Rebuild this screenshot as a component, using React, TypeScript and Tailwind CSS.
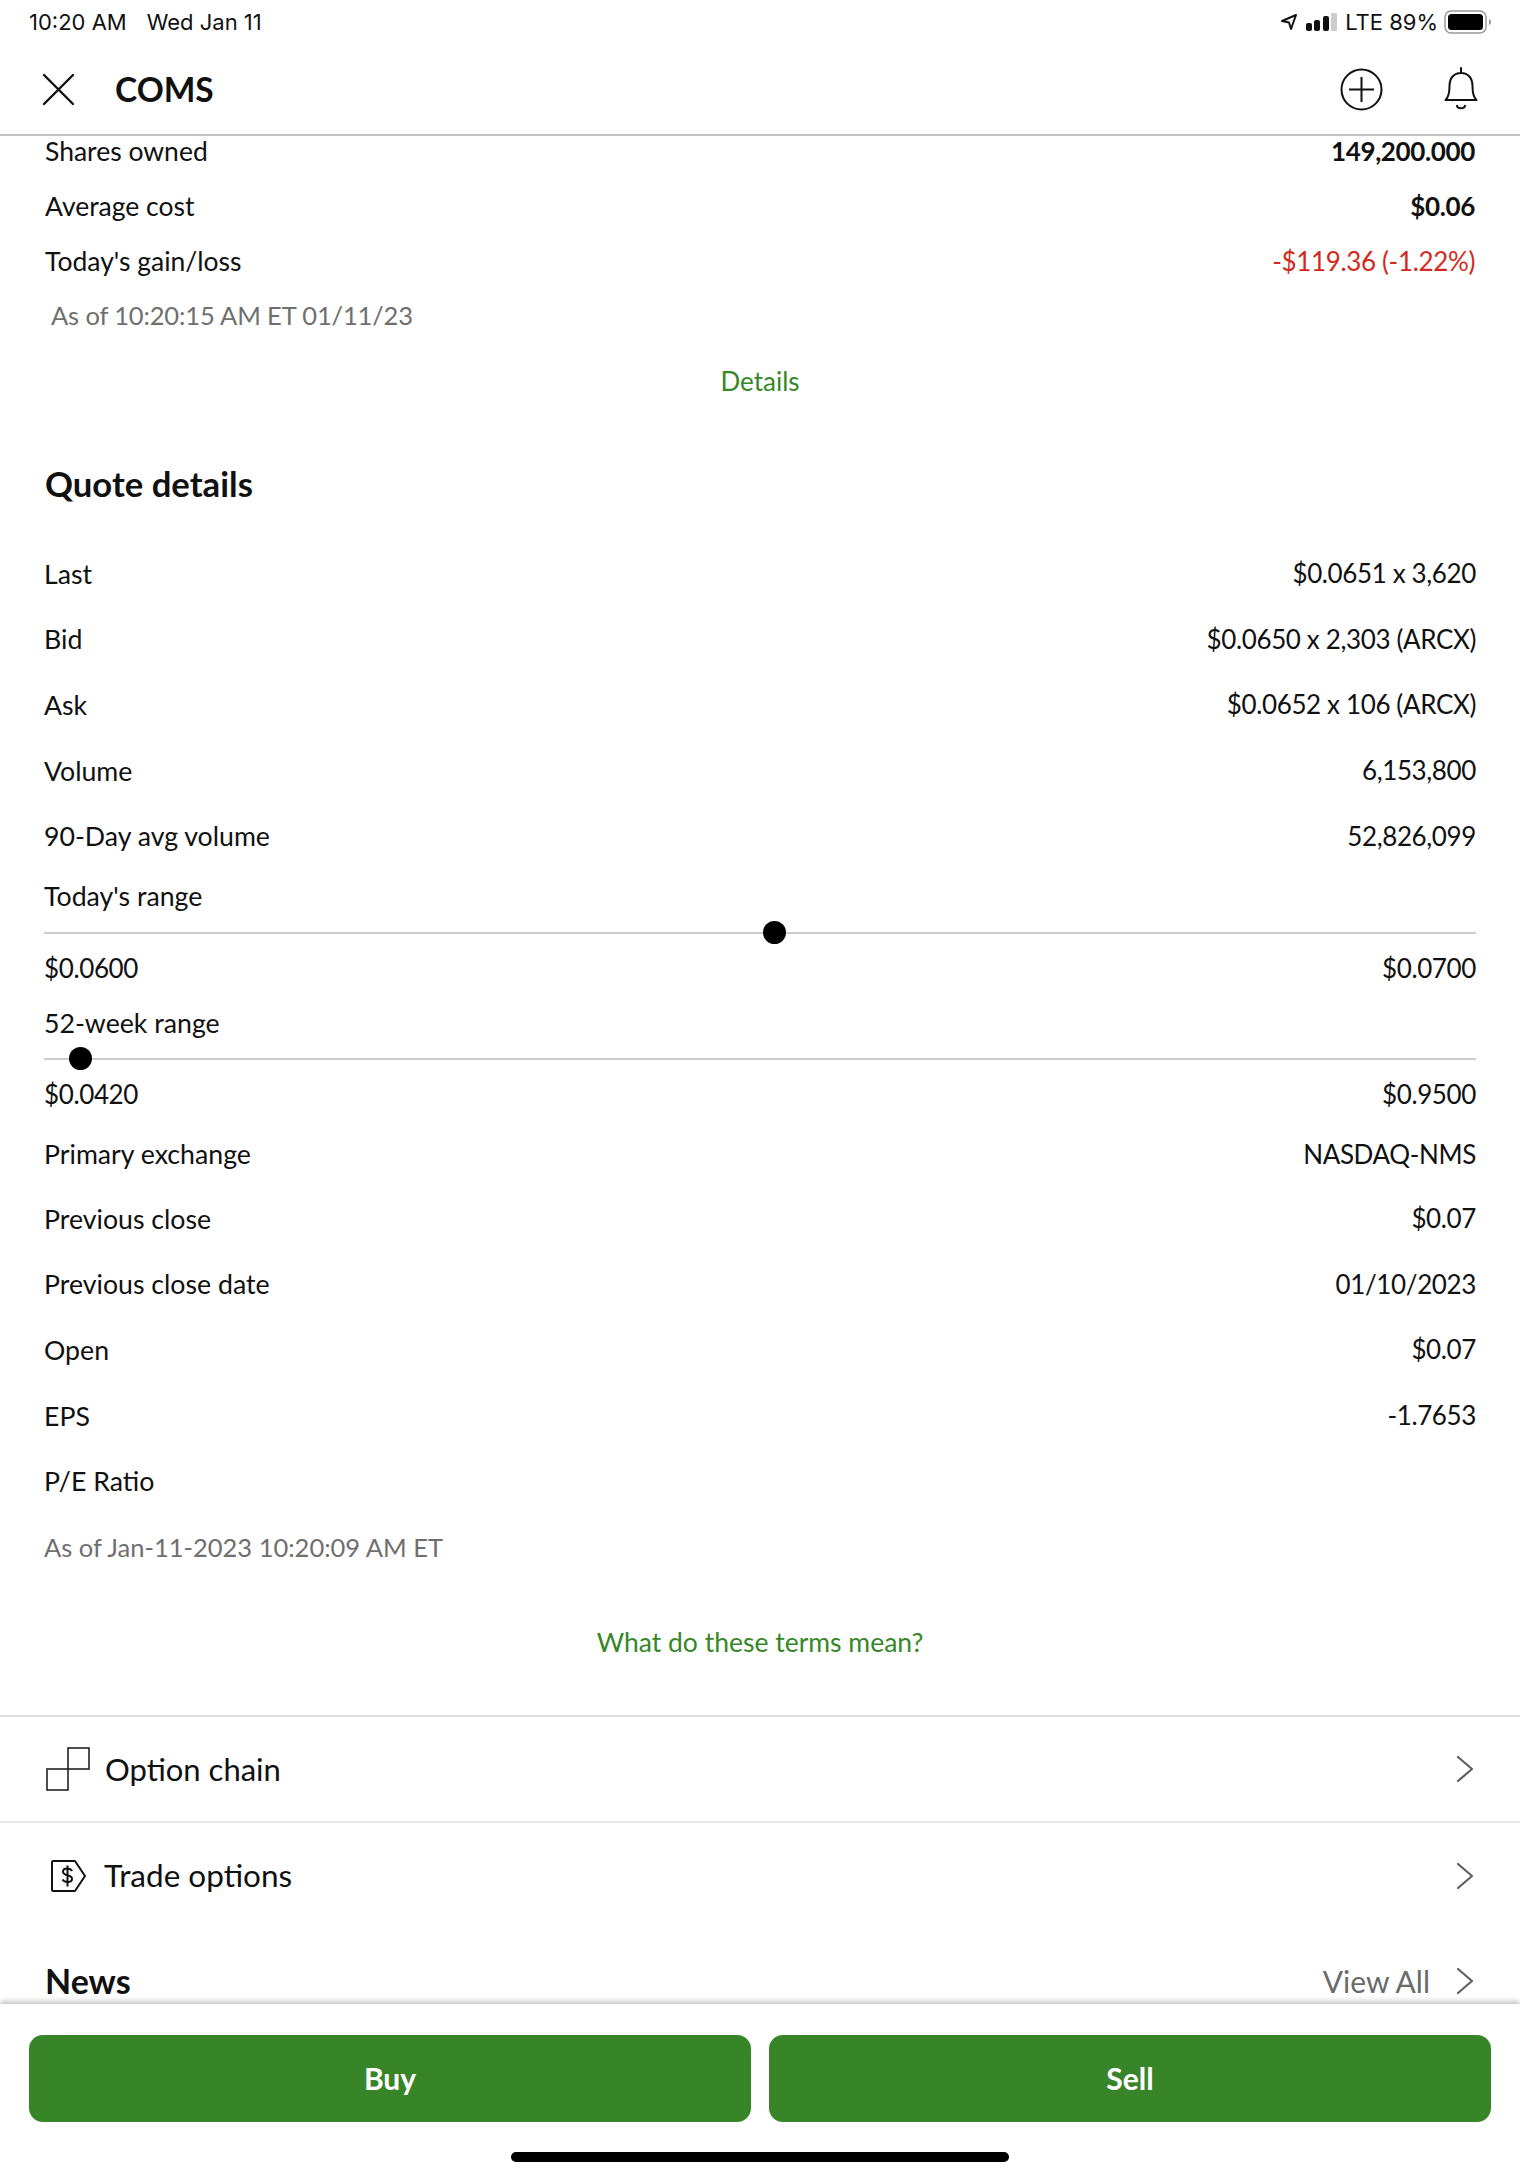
import React from 'react';

const font = "font-['Lato','Open_Sans',sans-serif]";

const Chevron = () => (
  <svg width="18" height="28" viewBox="0 0 18 28" fill="none" stroke="#5f5f5f" strokeWidth="2.200" strokeLinecap="round" strokeLinejoin="round">
    <path d="M2 2l14 12L2 26" />
  </svg>
);

const Row = ({ label, value, h = 'h-[65.6px]', extra = '' }: { label: string; value?: string; h?: string; extra?: string }) => (
  <div className={`flex items-center justify-between px-[44px] text-[#111] ${h} ${extra}`}>
    <span className="text-[26.700px]">{label}</span>
    <span className="text-[26px] tracking-[-0.37px]">{value}</span>
  </div>
);

const HoldingRow = ({ label, children }: { label: string; children: React.ReactNode }) => (
  <div className="flex items-center justify-between h-[55px] px-[45px] text-[#111]">
    <span className="text-[26.500px]">{label}</span>
    {children}
  </div>
);

const RangeSlider = ({ pos, low, high }: { pos: number; low: string; high: string }) => (
  <div className="px-[44px]">
    <div className="relative h-[2px] bg-[#cccccc]">
      <div
        className="absolute top-[-11px] w-[23px] h-[23px] rounded-full bg-black"
        style={{ left: `${pos}px` }}
      />
    </div>
    <div className="flex justify-between items-center h-[69px] text-[26px] tracking-[-0.37px] text-[#111]">
      <span>{low}</span>
      <span>{high}</span>
    </div>
  </div>
);

export default function App() {
  return (
    <div className={`${font} relative w-[1520px] h-[2176px] bg-white flex flex-col overflow-hidden`}>
      {/* status bar */}
      <div className="flex items-center justify-between h-[42px] pl-[29px] pr-[28px] pt-[2px] font-['Inter',sans-serif] text-[22px] text-[#111]">
        <div className="flex gap-[20px]">
          <span>10:20 AM</span>
          <span>Wed Jan 11</span>
        </div>
        <div className="flex items-center">
          <svg width="18" height="18" viewBox="0 0 18 18" fill="none" stroke="#111" strokeWidth="2" strokeLinejoin="round">
            <path d="M16 2 2 8l7 1.500L11 16z" />
          </svg>
          <svg width="31" height="18" viewBox="0 0 31 18" className="ml-[8px]">
            <rect x="0" y="10" width="6" height="8" rx="2" fill="#111" />
            <rect x="8" y="7" width="6" height="11" rx="2" fill="#111" />
            <rect x="17" y="3" width="6" height="15" rx="2" fill="#111" />
            <rect x="25" y="0" width="6" height="18" rx="1" fill="#ccc" />
          </svg>
          <span className="ml-[8px]">LTE 89%</span>
          <svg width="48" height="24" viewBox="0 0 48 24" className="ml-[6px]">
            <rect x="1" y="1" width="41" height="22" rx="6" fill="none" stroke="#999" strokeWidth="1.500" />
            <rect x="4" y="4" width="35" height="16" rx="3.500" fill="#000" />
            <path d="M45 9c1.500.5 2 1.500 2 3s-.5 2.500-2 3z" fill="#999" />
          </svg>
        </div>
      </div>

      {/* header */}
      <div className="flex items-center justify-between h-[94px] pl-[42px] pr-[42px] pt-[2px] border-b-2 border-[#c4c4c4]">
        <div className="flex items-center gap-[40px]">
          <svg width="33" height="33" viewBox="0 0 33 33" fill="none" stroke="#111" strokeWidth="2.400" strokeLinecap="round">
            <path d="M2 2l29 29M31 2 2 31" />
          </svg>
          <span className="text-[33.500px] font-bold text-[#111]">COMS</span>
        </div>
        <div className="flex items-center gap-[61px]">
          <svg width="43" height="43" viewBox="0 0 43 43" fill="none" stroke="#111" strokeWidth="2">
            <circle cx="21.500" cy="21.500" r="20" />
            <path d="M21.500 9v25M9 21.500h25" />
          </svg>
          <svg width="34" height="44" viewBox="0 0 34 44" fill="none" stroke="#111" strokeWidth="2" strokeLinecap="round" strokeLinejoin="round">
            <path d="M17 1v5M1.500 33c3.500-3 4-7 4-14 0-8 4.500-13 11.500-13s11.500 5 11.500 13c0 7 .5 11 4 14z" />
            <path d="M13 39c1 3 7 3 8 0" strokeWidth="2.200" />
          </svg>
        </div>
      </div>

      {/* scrolled content */}
      <div className="flex-1 overflow-hidden">
        <div className="mt-[-12px]">
          <HoldingRow label="Shares owned">
            <span className="font-bold text-[26px] tracking-[-0.36px]">149,200.000</span>
          </HoldingRow>
          <HoldingRow label="Average cost">
            <span className="font-bold text-[26px] tracking-[-0.36px]">$0.06</span>
          </HoldingRow>
          <HoldingRow label="Today's gain/loss">
            <span className="text-[#d12a20] text-[26px] tracking-[-0.35px]">-$119.36 (-1.22%)</span>
          </HoldingRow>
          <div className="h-[53px] flex items-center pl-[51px] text-[25.500px] tracking-[-0.14px] text-[#6f6f6f]">
            As of 10:20:15 AM ET 01/11/23
          </div>
          <div className="h-[78px] flex items-center justify-center text-[26px] text-[#368727]">Details</div>
        </div>

        <div className="h-[125px] pt-[3px] flex items-center pl-[45px] text-[34.700px] font-bold text-[#111]">Quote details</div>

        <div className="mt-[-4px]">
          <Row label="Last" value="$0.0651 x 3,620" />
          <Row label="Bid" value="$0.0650 x 2,303 (ARCX)" />
          <Row label="Ask" value="$0.0652 x 106 (ARCX)" />
          <Row label="Volume" value="6,153,800" />
          <Row label="90-Day avg volume" value="52,826,099" />
          <Row label="Today's range" h="h-[55px]" />
          <div className="h-[8px]" />
          <RangeSlider pos={719} low="$0.0600" high="$0.0700" />
          <Row label="52-week range" h="h-[41px]" />
          <div className="h-[14px]" />
          <RangeSlider pos={25} low="$0.0420" high="$0.9500" />
          <Row label="Primary exchange" value="NASDAQ-NMS" h="h-[57px]" extra="pb-[6px]" />
          <Row label="Previous close" value="$0.07" />
          <Row label="Previous close date" value="01/10/2023" />
          <Row label="Open" value="$0.07" />
          <Row label="EPS" value="-1.7653" />
          <Row label="P/E Ratio" />
          <div className="h-[66px] flex items-center px-[44px] text-[25.500px] text-[#6f6f6f]">
            As of Jan-11-2023 10:20:09 AM ET
          </div>
        </div>

        <div className="h-[135px] pb-[10px] flex items-center justify-center text-[26.500px] text-[#368727]">
          What do these terms mean?
        </div>

        <div className="border-t-2 border-[#e0e0e0]">
          <div className="flex items-center justify-between h-[106px] pl-[46px] pr-[46px] border-b-2 border-[#e8e8e8]">
            <div className="flex items-center gap-[15px]">
              <svg width="44" height="44" viewBox="0 0 44 44" fill="none" stroke="#222" strokeWidth="1.600">
                <rect x="1" y="22" width="21" height="21" />
                <rect x="22" y="1" width="21" height="21" />
              </svg>
              <span className="text-[31px] text-[#111]">Option chain</span>
            </div>
            <Chevron />
          </div>
          <div className="flex items-center justify-between h-[106px] pl-[51px] pr-[46px]">
            <div className="flex items-center gap-[17px]">
              <svg width="36" height="32" viewBox="0 0 36 32" fill="none" stroke="#111" strokeWidth="2" strokeLinejoin="round">
                <path d="M2 1h22l10 15-10 15H2a1 1 0 0 1-1-1V2a1 1 0 0 1 1-1z" />
                <path d="M21 11c-1-2-3-2.500-5-2.500-2.500 0-4 1.300-4 3.300 0 4.500 9 2.500 9 7 0 2-1.700 3.300-4.500 3.300-2.300 0-4-.8-5-2.500M16.500 5.500v21" strokeWidth="2" />
              </svg>
              <span className="text-[31.500px] text-[#111]">Trade options</span>
            </div>
            <Chevron />
          </div>
          <div className="flex items-center justify-between h-[34px] mt-[35px] pl-[45px] pr-[46px]">
            <span className="text-[34px] leading-none font-bold text-[#111]">News</span>
            <div className="flex items-center gap-[26px] text-[#6a6a6a]">
              <span className="text-[30px] leading-none">View All</span>
              <Chevron />
            </div>
          </div>
        </div>
      </div>

      {/* action bar */}
      <div className="relative h-[172px] bg-white shadow-[0_-3px_5px_rgba(0,0,0,0.22)] px-[29px] pt-[31px]">
        <div className="flex gap-[18px]">
          <button className="flex-1 h-[87px] rounded-[14px] bg-[#388529] text-white text-[30px] font-bold">Buy</button>
          <button className="flex-1 h-[87px] rounded-[14px] bg-[#388529] text-white text-[30px] font-bold">Sell</button>
        </div>
        <div className="absolute left-[511px] bottom-[14px] w-[498px] h-[10px] rounded-full bg-black" />
      </div>
    </div>
  );
}
